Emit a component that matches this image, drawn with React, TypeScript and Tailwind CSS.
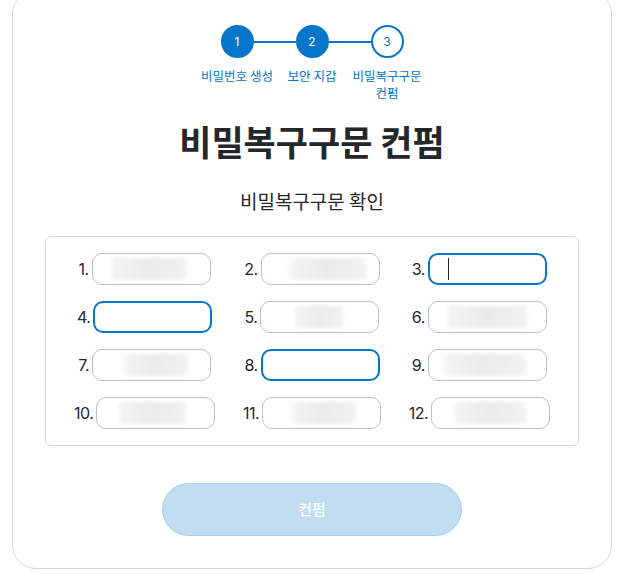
const steps = ["비밀번호 생성", "보안 지갑", "비밀복구구문 컨펌"];

type Word = {
  n: number;
  focused?: boolean;
  caret?: boolean;
  blur?: [number, number];
};

const words: Word[] = [
  { n: 1, blur: [20, 75] },
  { n: 2, blur: [29, 75] },
  { n: 3, focused: true, caret: true },
  { n: 4, focused: true },
  { n: 5, blur: [35, 47] },
  { n: 6, blur: [20, 78] },
  { n: 7, blur: [31, 65] },
  { n: 8, focused: true },
  { n: 9, blur: [15, 82] },
  { n: 10, blur: [23, 67] },
  { n: 11, blur: [29, 65] },
  { n: 12, blur: [23, 71] },
];

const kr = "font-['Noto_Sans_CJK_KR',sans-serif]";

function Stepper() {
  return (
    <div className="flex justify-center">
      {steps.map((label, i) => {
        const done = i < 2;
        return (
          <div key={label} className="flex w-[75px] flex-col items-center">
            <div className="flex w-full items-center">
              <div className={`h-[2px] flex-1 ${i > 0 ? "bg-[#0376c9]" : ""}`} />
              <div
                className={`flex h-[33px] w-[33px] items-center justify-center rounded-full border-2 border-[#0376c9] text-[12px] ${
                  done ? "bg-[#0376c9] text-white" : "bg-white text-[#0376c9]"
                }`}
              >
                {i + 1}
              </div>
              <div className={`h-[2px] flex-1 ${i < 2 ? "bg-[#0376c9]" : ""}`} />
            </div>
            <p className={`${kr} mt-[9px] text-center text-[12.5px] leading-[17px] text-[#0376c9]`}>
              {label}
            </p>
          </div>
        );
      })}
    </div>
  );
}

function WordField({ w }: { w: Word }) {
  return (
    <div className="flex items-center justify-center gap-[3px]">
      <span className="text-[16px] tracking-[-0.5px] text-[#24272a]">{w.n}.</span>
      <div
        className={`flex h-[32px] w-[119px] items-center rounded-[10px] bg-white ${
          w.focused ? "border-2 border-[#0376c9]" : "border border-[#bbc0c5]"
        }`}
      >
        {w.blur && (
          <div
            className="h-[22px] bg-[linear-gradient(90deg,#f4f4f4,#eaeaea,#f1f1f1)] blur-[2px]"
            style={{ marginLeft: w.blur[0] - 1, width: w.blur[1] }}
          />
        )}
        {w.caret && <div className="ml-[18px] h-[22px] w-px bg-[#24272a]" />}
      </div>
    </div>
  );
}

export default function App() {
  return (
    <div className="min-h-screen overflow-hidden bg-white font-['Inter','Noto_Sans_CJK_KR',sans-serif]">
      <div className="mx-[12px] mt-[-10px] w-[600px] rounded-[24px] border border-[#d6d9dc] pt-[34px] pb-[32px]">
        <Stepper />
        <h1 className={`${kr} mt-[20px] text-center text-[35px] leading-[40px] font-bold text-[#24272a]`}>
          비밀복구구문 컨펌
        </h1>
        <p className={`${kr} mt-[28px] text-center text-[19px] leading-[24px] text-[#24272a]`}>
          비밀복구구문 확인
        </p>
        <div className="mx-[32px] mt-[23px] grid grid-cols-3 gap-y-4 rounded-[6px] border border-[#d6d9dc] px-[15px] py-4">
          {words.map((w) => (
            <WordField key={w.n} w={w} />
          ))}
        </div>
        <div className="mt-[37px] flex justify-center">
          <button
            type="button"
            className={`${kr} h-[53px] w-[300px] rounded-full border border-[#a6cdea] bg-[#c1ddf2] text-[15px] font-medium text-white`}
          >
            컨펌
          </button>
        </div>
      </div>
    </div>
  );
}
